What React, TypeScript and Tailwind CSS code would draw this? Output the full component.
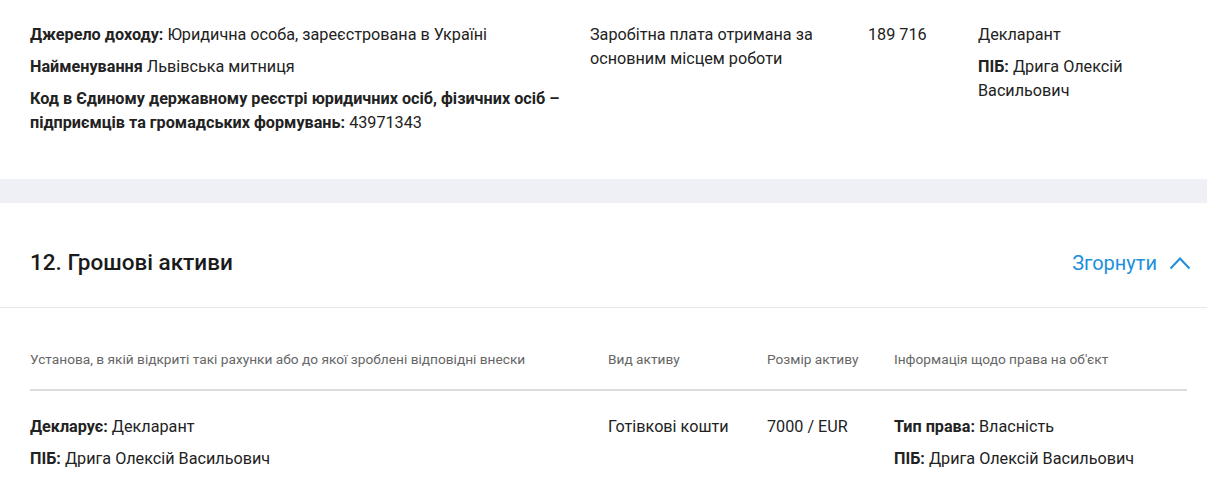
const HEAD = [
  { label: "Установа, в якій відкриті такі рахунки або до якої зроблені відповідні внески", w: "w-[578px]" },
  { label: "Вид активу", w: "w-[159px]" },
  { label: "Розмір активу", w: "w-[127px]" },
  { label: "Інформація щодо права на об'єкт", w: "flex-1" },
];

function Field({ label, value }: { label: string; value: string }) {
  return (
    <p>
      <b className="font-bold">{label}</b> {value}
    </p>
  );
}

function IncomeRow() {
  return (
    <section className="bg-white px-[30px] pt-[23px] pb-[44px] flex text-[16.2px] leading-[24px] text-[#222]">
      <div className="w-[560px] flex flex-col gap-2 pr-3">
        <Field label="Джерело доходу:" value="Юридична особа, зареєстрована в Україні" />
        <Field label="Найменування" value="Львівська митниця" />
        <Field
          label="Код в Єдиному державному реєстрі юридичних осіб, фізичних осіб – підприємців та громадських формувань:"
          value="43971343"
        />
      </div>
      <div className="w-[278px] pr-6">Заробітна плата отримана за основним місцем роботи</div>
      <div className="w-[110px]">189 716</div>
      <div className="flex-1 flex flex-col gap-2 pr-10">
        <p>Декларант</p>
        <Field label="ПІБ:" value="Дрига Олексій Васильович" />
      </div>
    </section>
  );
}

export default function App() {
  return (
    <div className="min-h-screen bg-white font-['Roboto',sans-serif]">
      <IncomeRow />
      <div className="h-6 bg-[#eff0f5]" />

      <section className="bg-white">
        {/* Section header */}
        <div className="h-[105px] pt-[15px] pl-[30px] pr-4 flex items-center justify-between border-b border-[#e8e8e8]">
          <h2 className="text-[22.5px] font-medium text-[#1a1a1a]">12. Грошові активи</h2>
          <button className="flex items-center gap-3 text-[20px] text-[#1e8fdb]">
            Згорнути
            <svg width="22" height="14" viewBox="0 0 22 14" fill="none" aria-hidden="true">
              <path d="M1.5 12.5 L11 2.5 L20.5 12.5" stroke="#1e8fdb" strokeWidth="2" />
            </svg>
          </button>
        </div>

        {/* Table */}
        <div className="pl-[30px] pr-[20px]">
          <div className="flex pt-[41px] pb-[20px] border-b-2 border-[#dcdcdc] text-[13.7px] leading-[20px] text-[#666]">
            {HEAD.map((h) => (
              <div key={h.label} className={h.w}>
                {h.label}
              </div>
            ))}
          </div>
          <div className="flex pt-[24px] pb-6 text-[16.2px] leading-[24px] text-[#222]">
            <div className="w-[578px] flex flex-col gap-2">
              <Field label="Декларує:" value="Декларант" />
              <Field label="ПІБ:" value="Дрига Олексій Васильович" />
            </div>
            <div className="w-[159px]">Готівкові кошти</div>
            <div className="w-[127px]">7000 / EUR</div>
            <div className="flex-1 flex flex-col gap-2">
              <Field label="Тип права:" value="Власність" />
              <Field label="ПІБ:" value="Дрига Олексій Васильович" />
            </div>
          </div>
        </div>
      </section>
    </div>
  );
}
